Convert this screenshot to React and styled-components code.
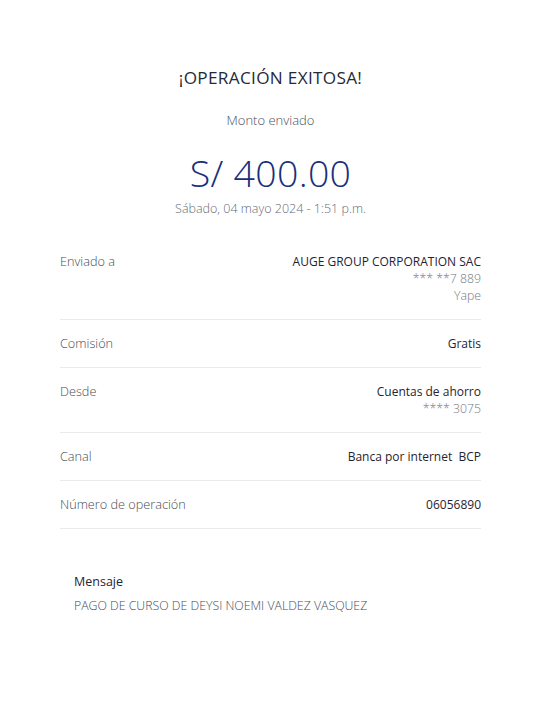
import React from "react";
import styled, { createGlobalStyle } from "styled-components";

const Global = createGlobalStyle`
  html, body { margin: 0; padding: 0; background: #ffffff; }
  body { font-family: "Open Sans", "Noto Sans", sans-serif; -webkit-font-smoothing: antialiased; }
`;

const Page = styled.div`
  width: 539px;
  min-height: 718px;
  box-sizing: border-box;
  padding: 66px 58px 0 60px;
  display: flex;
  flex-direction: column;
`;

const Header = styled.div`
  display: flex;
  flex-direction: column;
  align-items: center;
`;

const Title = styled.h1`
  margin: 0;
  font-size: 17.2px;
  line-height: 24px;
  font-weight: 500;
  color: #252a36;
  letter-spacing: 0.3px;
`;

const Subtitle = styled.div`
  margin-top: 21px;
  font-size: 13px;
  line-height: 18px;
  font-weight: 300;
  color: #4a505d;
`;

const Amount = styled.div`
  margin-top: 22px;
  font-size: 37.5px;
  line-height: 44px;
  font-weight: 300;
  color: #17307a;
  letter-spacing: 0.3px;
`;

const DateText = styled.div`
  margin-top: 5px;
  font-size: 12.5px;
  line-height: 18px;
  font-weight: 300;
  color: #666c78;
`;

const List = styled.div`
  margin-top: 20px;
  display: flex;
  flex-direction: column;
`;

const Row = styled.div`
  display: flex;
  justify-content: space-between;
  align-items: flex-start;
  padding: 15px 0 15px;
  border-bottom: 1px solid #e8eaee;
`;

const Label = styled.div`
  font-size: 12.7px;
  line-height: 17px;
  font-weight: 300;
  color: #474d59;
`;

const Values = styled.div`
  display: flex;
  flex-direction: column;
  align-items: flex-end;
  text-align: right;
`;

const Value = styled.div`
  font-size: ${(p) => (p.$sub ? "12.3px" : "12px")};
  line-height: 17px;
  font-weight: ${(p) => (p.$sub ? 300 : 500)};
  color: ${(p) => (p.$sub ? "#737986" : "#1f2430")};
`;

const Message = styled.div`
  margin-top: 44px;
  padding-left: 14px;
  display: flex;
  flex-direction: column;
  gap: 7px;
`;

const MessageTitle = styled.div`
  font-size: 12.5px;
  line-height: 17px;
  font-weight: 400;
  color: #1f2430;
`;

const MessageText = styled.div`
  font-size: 12.3px;
  line-height: 17px;
  font-weight: 300;
  color: #474d59;
`;

const rows = [
  { label: "Enviado a", values: ["AUGE GROUP CORPORATION SAC"], subs: ["*** **7 889", "Yape"] },
  { label: "Comisión", values: ["Gratis"], subs: [] },
  { label: "Desde", values: ["Cuentas de ahorro"], subs: ["**** 3075"] },
  { label: "Canal", values: ["Banca por internet\u00a0 BCP"], subs: [] },
  { label: "Número de operación", values: ["06056890"], subs: [] },
];

export default function App() {
  return (
    <>
      <Global />
      <Page>
        <Header>
          <Title>¡OPERACIÓN EXITOSA!</Title>
          <Subtitle>Monto enviado</Subtitle>
          <Amount>S/ 400.00</Amount>
          <DateText>Sábado, 04 mayo 2024 - 1:51 p.m.</DateText>
        </Header>
        <List>
          {rows.map((r) => (
            <Row key={r.label}>
              <Label>{r.label}</Label>
              <Values>
                {r.values.map((v) => (
                  <Value key={v}>{v}</Value>
                ))}
                {r.subs.map((v) => (
                  <Value key={v} $sub>
                    {v}
                  </Value>
                ))}
              </Values>
            </Row>
          ))}
        </List>
        <Message>
          <MessageTitle>Mensaje</MessageTitle>
          <MessageText>PAGO DE CURSO DE DEYSI NOEMI VALDEZ VASQUEZ</MessageText>
        </Message>
      </Page>
    </>
  );
}
